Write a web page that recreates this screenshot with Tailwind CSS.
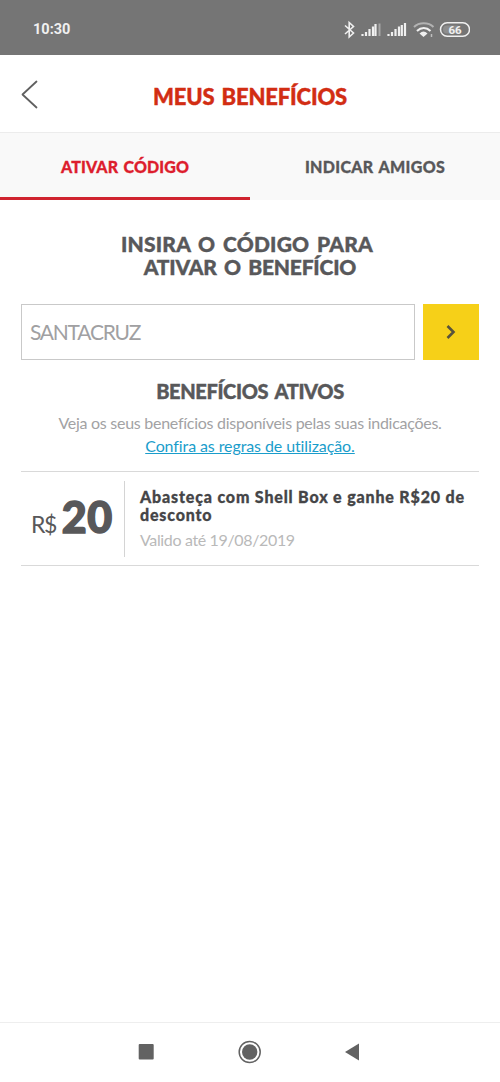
<!DOCTYPE html>
<html lang="pt-BR">
<head>
<meta charset="utf-8">
<title>Meus Benefícios</title>
<script src="https://cdn.jsdelivr.net/npm/@tailwindcss/browser@4"></script>
</head>
<body class="bg-white">
<div class="flex h-[1082px] w-[500px] flex-col overflow-hidden bg-white font-['Lato',sans-serif] text-[#58585a]">
  <header class="flex h-[55px] items-center justify-between bg-[#757575] pt-1 pr-[30px] pl-[33px] text-[#f0f0f0]">
    <span class="pt-px font-['Roboto',sans-serif] text-[14.500px] leading-5 font-bold">10:30</span>
    <svg class="h-[40px] w-[130px]" viewBox="340 9 130 40" fill="none" stroke="currentColor">
      <path d="M345 24.500l8.500 7.500-4.300 4V21.500l4.300 4-8.500 7.500" stroke-width="1.600"/>
      <path d="M362.500 35v-2M366 35v-4M369.500 35v-7M373 35v-9.500M375.500 35v-12" stroke-width="2.200"/>
      <path d="M379.500 35V22.500" stroke-width="2" opacity=".4"/>
      <path d="M388.500 35v-2M392 35v-4M395.500 35v-7M399 35v-9.500M401.800 35v-11M405 35V22" stroke-width="2.200"/>
      <path d="M414 26c5-5 14.500-5 19.500 0" stroke-width="2" opacity=".5"/>
      <path d="M417 30c4-4 9.500-4 13.500 0" stroke-width="2"/>
      <path d="M419.500 32.500q4-4 8 0l-4 3.500z" fill="currentColor" stroke="none"/>
      <path d="M431.500 33v3" stroke-width="1.500" opacity=".6"/>
      <rect x="440.500" y="21.700" width="29" height="13.500" rx="6.700" stroke-width="1.500"/>
      <rect x="443" y="24.500" width="17" height="8" rx="4" fill="currentColor" stroke="none" opacity=".2"/>
      <text x="455" y="32.600" text-anchor="middle" font-family="Roboto" font-size="11.500" font-weight="700" fill="currentColor" stroke="none">66</text>
    </svg>
  </header>
  <div class="grid h-[78px] grid-cols-[60px_1fr_60px] items-center border-b border-[#ececec]">
    <svg class="ml-5 h-8 w-5" viewBox="0 0 20 32" fill="none" stroke="#606060" stroke-width="1.800" stroke-linecap="round" stroke-linejoin="round"><path d="M16.500 3.500L2.500 16.500 16.500 29.500"/></svg>
    <h1 class="pt-1.5 text-center text-[22px] font-black tracking-[-0.150px] whitespace-nowrap text-[#d22d13] [word-spacing:2px] [-webkit-text-stroke:0.4px]">MEUS BENEFÍCIOS</h1>
  </div>
  <nav class="grid h-[67px] grid-cols-2 bg-[#f9f9f9] text-center text-[16px] font-black [-webkit-text-stroke:0.3px]">
    <div class="flex items-center justify-center border-b-[3px] border-[#d0232f] pt-[3px] tracking-[0.100px] text-[#dd1d2d] [word-spacing:1.500px]">ATIVAR CÓDIGO</div>
    <div class="flex items-center justify-center tracking-[0.300px] [word-spacing:1.500px]">INDICAR AMIGOS</div>
  </nav>
  <main class="px-[21px] pt-8">
    <h2 class="text-center text-[21px] leading-[23px] font-black [-webkit-text-stroke:0.4px]"><span class="pr-[6px] tracking-[0.2px] [word-spacing:2.500px]">INSIRA O CÓDIGO PARA</span><br><span class="tracking-[-0.200px] [word-spacing:2.500px]">ATIVAR O BENEFÍCIO</span></h2>
    <div class="mt-[26px] flex h-14 gap-2">
      <div class="flex flex-1 items-center border border-[#c9c9c9] pl-2 text-[21px] tracking-[-1.250px] text-[#a0a0a2]">SANTACRUZ</div>
      <div class="flex w-14 items-center justify-center bg-[#f6d018]">
        <svg class="size-4" viewBox="0 0 16 16" fill="none" stroke="#58533c" stroke-width="2.600"><path d="M4.500 2l6 6-6 6"/></svg>
      </div>
    </div>
    <h2 class="mt-[18px] text-center text-[20px] leading-[26px] font-black tracking-[-0.350px] [word-spacing:2.500px] [-webkit-text-stroke:0.4px]">BENEFÍCIOS ATIVOS</h2>
    <p class="mt-[7px] text-center text-[16px] leading-[23px] text-[#a2a2a4]"><span class="tracking-[-0.270px]">Veja os seus benefícios disponíveis pelas suas indicações.</span><br><a class="tracking-[-0.100px] text-[#1a9dcb] underline">Confira as regras de utilização.</a></p>
    <section class="mt-[14px] flex h-[95px] items-center border-y border-[#d9d9d9]">
      <div class="flex h-[76px] w-[104px] items-baseline border-r border-[#d4d4d4] pt-1 pl-[10px]"><span class="text-[23px] tracking-[-1.500px]">R$</span><span class="ml-[6px] text-[43px] font-black tracking-[0.500px] [-webkit-text-stroke:1.500px]">20</span></div>
      <div class="pl-[15px]">
        <h3 class="text-[16px] leading-[18px] font-black tracking-[0.830px] whitespace-nowrap text-[#454547] [-webkit-text-stroke:0.3px]">Abasteça com Shell Box e ganhe R$20 de<br>desconto</h3>
        <p class="mt-[6px] text-[16px] leading-5 tracking-[-0.350px] text-[#b9b9b9]">Valido até 19/08/2019</p>
      </div>
    </section>
  </main>
  <footer class="mt-auto h-[60px] border-t border-[#eee]">
    <svg class="h-[59px] w-[500px]" viewBox="0 1023 500 59" fill="#626262"><rect x="138.700" y="1044" width="15" height="15.500" rx="1"/><circle cx="249.700" cy="1052" r="7.700"/><circle cx="249.700" cy="1052" r="10.500" fill="none" stroke="#626262" stroke-width="1.500"/><path d="M345 1052l14-8.500v17z"/></svg>
  </footer>
</div>
</body>
</html>
